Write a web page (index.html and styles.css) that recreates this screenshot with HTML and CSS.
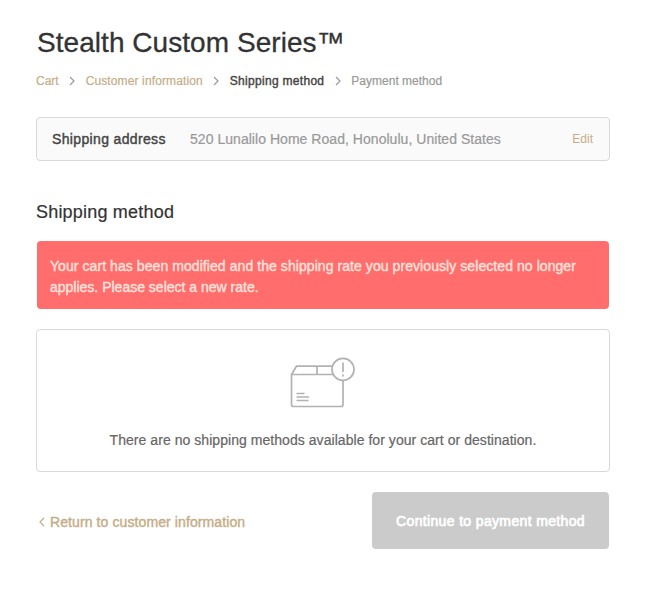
FILE: index.html
```html
<!DOCTYPE html>
<html lang="en">

<head>
    <meta charset="UTF-8">
    <meta name="viewport" content="width=device-width, initial-scale=1.0">
    <title>Shipping method - Stealth Custom Series</title>
    <link rel="stylesheet" href="styles.css">
</head>

<body>
    <div class="container">
        <header>
            <h1>Stealth Custom Series™</h1>
            <nav class="breadcrumb">
                <a href="#">Cart</a>
                <svg class="chevron" viewBox="0 0 6 10"><path d="M1 1l4 4-4 4"/></svg>
                <a href="#" class="crumb-info">Customer information</a>
                <svg class="chevron" viewBox="0 0 6 10"><path d="M1 1l4 4-4 4"/></svg>
                <span class="current">Shipping method</span>
                <svg class="chevron" viewBox="0 0 6 10"><path d="M1 1l4 4-4 4"/></svg>
                <span class="upcoming">Payment method</span>
            </nav>
        </header>

        <div class="address-box">
            <span class="address-label">Shipping address</span>
            <span class="address">520 Lunalilo Home Road, Honolulu, United States</span>
            <a href="#" class="edit">Edit</a>
        </div>

        <h2>Shipping method</h2>
        <div class="notice">
            <p class="notice-first">Your cart has been modified and the shipping rate you previously selected no longer</p>
            <p>applies. Please select a new rate.</p>
        </div>

        <div class="blank-slate">
            <svg class="package-icon" viewBox="0 0 66 52" width="66" height="52">
                <path d="M53 24v23.500a2 2 0 0 1-2 2H3.500a2 2 0 0 1-2-2V17.500L6.500 9.200H43M1.500 17.500H44M27 9.200V17.500"/>
                <path d="M6.500 36.500h8M6.500 40h12.500M6.500 43.500h12"/>
                <circle cx="53" cy="12.400" r="11"/>
                <path d="M53 5.500v9.500M53 17.500v2"/>
            </svg>
            <p>There are no shipping methods available for your cart or destination.</p>
        </div>

        <div class="step-footer">
            <a href="#" class="return-link">
                <svg class="chevron" viewBox="0 0 6 10"><path d="M5 1L1 5l4 4"/></svg>
                <span>Return to customer information</span>
            </a>
            <button type="button" disabled>Continue to payment method</button>
        </div>
    </div>
</body>

</html>
```
FILE: styles.css
```css
* {
    box-sizing: border-box;
}

body {
    margin: 0;
    background-color: #fff;
    font-family: "Liberation Sans", Arial, sans-serif;
    font-size: 14px;
    line-height: 21px;
    color: #666;
}

.container {
    width: 574px;
    margin-left: 36px;
    padding-top: 24px;
}

h1,
h2,
p {
    margin: 0;
    font-weight: normal;
}

h1 {
    padding-left: 1px;
    font-size: 28px;
    line-height: 37px;
    letter-spacing: 0.05px;
    color: #333;
    -webkit-text-stroke: 0.3px #333;
}

a {
    color: #c5ad87;
    text-decoration: none;
}

svg {
    fill: none;
    flex: none;
}

.breadcrumb {
    display: flex;
    align-items: center;
    margin-top: 10px;
    font-size: 12px;
    line-height: 20px;
    white-space: nowrap;
}

.breadcrumb a {
    -webkit-text-stroke: 0.2px #c5ad87;
}

.crumb-info {
    letter-spacing: 0.12px;
}

.chevron {
    width: 6px;
    height: 10px;
    stroke: #999;
    stroke-width: 1.2;
}

.breadcrumb .chevron {
    margin: 0 10.5px;
}

.current {
    letter-spacing: 0.3px;
    color: #444;
    -webkit-text-stroke: 0.4px #444;
}

.upcoming {
    color: #999;
    -webkit-text-stroke: 0.2px #999;
}

.address-box {
    display: flex;
    align-items: center;
    height: 44px;
    margin-top: 26px;
    padding: 0 16px 0 15px;
    border: 1px solid #d9d9d9;
    border-radius: 4px;
    background-color: #fafafa;
}

.address-label {
    width: 138px;
    letter-spacing: 0.35px;
    color: #444;
    -webkit-text-stroke: 0.4px #444;
}

.address {
    letter-spacing: 0.04px;
    color: #999;
    -webkit-text-stroke: 0.2px #999;
}

.edit {
    margin-left: auto;
    font-size: 12px;
}

h2 {
    margin-top: 39px;
    font-size: 18px;
    line-height: 24px;
    letter-spacing: 0.2px;
    color: #333;
    -webkit-text-stroke: 0.2px #333;
}

.notice {
    height: 68px;
    margin: 17px 1px 0;
    padding: 15px 13px 0;
    border-radius: 4px;
    background-color: #ff6d6d;
    color: #ffe1dc;
    -webkit-text-stroke: 0.4px #ffe1dc;
    white-space: nowrap;
}

.notice-first {
    letter-spacing: 0.07px;
}

.blank-slate {
    display: flex;
    flex-direction: column;
    align-items: center;
    height: 143px;
    margin-top: 20px;
    padding-top: 27px;
    border: 1px solid #d9d9d9;
    border-radius: 4px;
}

.package-icon {
    stroke: #b2b2b2;
    stroke-width: 1.7;
}

.blank-slate p {
    margin-top: 21px;
    letter-spacing: 0.05px;
    -webkit-text-stroke: 0.2px #666;
}

.step-footer {
    display: flex;
    align-items: center;
    justify-content: space-between;
    margin-top: 20px;
    padding: 0 1px;
}

.return-link {
    display: flex;
    align-items: center;
    gap: 5px;
    margin: 3px 0 0 2px;
    letter-spacing: 0.1px;
    -webkit-text-stroke: 0.4px #c5ad87;
}

.return-link .chevron {
    stroke: #c5ad87;
}

button {
    width: 237px;
    height: 57px;
    padding: 2px 0 0;
    border: none;
    border-radius: 4px;
    background-color: #cbcbcb;
    color: #fff;
    font: inherit;
    letter-spacing: 0.35px;
    -webkit-text-stroke: 0.7px #fff;
}
```
